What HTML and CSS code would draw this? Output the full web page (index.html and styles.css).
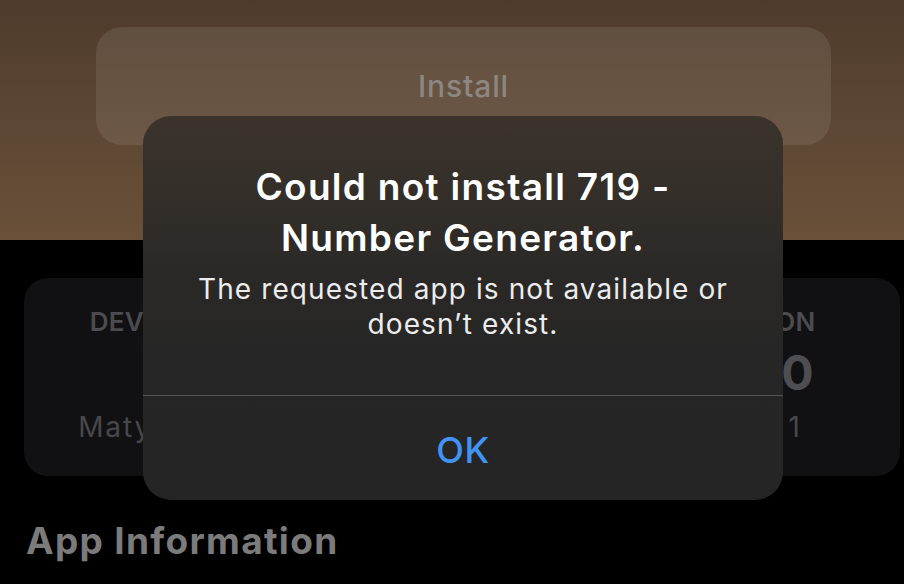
FILE: index.html
```html
<!DOCTYPE html>
<html lang="en">
<head>
<meta charset="utf-8">
<title>Could not install</title>
<link rel="stylesheet" href="styles.css">
</head>
<body>
<div class="screen">
  <header class="hero">
    <div class="install-btn">Install</div>
  </header>

  <section class="cards">
    <div class="card">
      <div class="card-label">DEVELOPER</div>
      <div class="card-value icon-slot"></div>
      <div class="card-sub card-name">Matyáš Kříž</div>
    </div>
    <div class="card"></div>
    <div class="card">
      <div class="card-label">VERSION</div>
      <div class="card-value">1.0.0</div>
      <div class="card-sub">Build 1</div>
    </div>
  </section>

  <h2 class="section-title">App Information</h2>

  <div class="alert" role="alertdialog">
    <div class="alert-body">
      <div class="alert-title">Could not install 719 - Number Generator.</div>
      <div class="alert-message">The requested app is not available or doesn’t exist.</div>
    </div>
    <div class="alert-actions">
      <button class="alert-btn">OK</button>
    </div>
  </div>
</div>
</body>
</html>
```

FILE: styles.css
```css
* { box-sizing: border-box; }

html, body {
  margin: 0;
  padding: 0;
  background: #000;
}

body {
  font-family: Inter, "Noto Sans", "Liberation Sans", sans-serif;
  width: 904px;
  height: 584px;
  overflow: hidden;
}

.screen {
  position: relative;
  width: 904px;
  height: 584px;
  background: #000;
}

.hero {
  height: 240px;
  padding: 27px 73px 0 96px;
  background: linear-gradient(180deg, #4e3b2b 0%, #5b4532 45%, #6a5039 100%);
}

.install-btn {
  height: 118px;
  border-radius: 26px;
  background: rgba(255, 255, 255, 0.09);
  color: #8c8781;
  font-size: 30px;
  font-weight: 500;
  letter-spacing: 0.9px;
  display: flex;
  align-items: center;
  justify-content: center;
}

.cards {
  display: grid;
  grid-template-columns: repeat(3, 286px);
  gap: 9px;
  padding: 38px 0 0 24px;
}

.card {
  height: 198px;
  border-radius: 24px;
  background: #111113;
  display: flex;
  flex-direction: column;
  align-items: center;
  padding-top: 29px;
}

.card-label {
  font-size: 26px;
  line-height: 30px;
  font-weight: 600;
  color: #4b4b50;
  letter-spacing: 0.2px;
}

.card-value {
  margin-top: 8px;
  font-size: 48px;
  line-height: 56px;
  font-weight: 700;
  color: #4e4e52;
}

.icon-slot {
  height: 56px;
}

.card-sub {
  margin-top: 9px;
  font-size: 28px;
  line-height: 34px;
  color: #48484c;
  letter-spacing: 0.2px;
}

.card-name {
  letter-spacing: 1.9px;
}

.section-title {
  margin: 43px 0 0 26px;
  font-size: 37px;
  line-height: 44px;
  font-weight: 700;
  color: #7b7b7b;
  letter-spacing: 1.3px;
}

.alert {
  position: absolute;
  left: 143px;
  top: 116px;
  width: 640px;
  height: 384px;
  border-radius: 28px;
  background: linear-gradient(180deg, #3b332c 0px, #332e29 90px, #2b2927 150px, #262626 240px, #252525 384px);
  display: flex;
  flex-direction: column;
  overflow: hidden;
}

.alert-body {
  padding: 45px 30px 0;
  height: 280px;
  border-bottom: 1px solid #545454;
  text-align: center;
  display: flex;
  flex-direction: column;
  align-items: center;
}

.alert-title {
  max-width: 470px;
  font-size: 37px;
  line-height: 51px;
  font-weight: 600;
  color: #ffffff;
  letter-spacing: 1.3px;
}

.alert-message {
  margin-top: 9px;
  font-size: 28px;
  line-height: 35px;
  font-weight: 400;
  color: #ececec;
  letter-spacing: 1.1px;
}

.alert-actions {
  flex: 1;
  display: flex;
}

.alert-btn {
  flex: 1;
  border: 0;
  background: transparent;
  font-family: inherit;
  font-size: 36px;
  font-weight: 500;
  color: #4194f4;
  letter-spacing: 0.5px;
  padding: 4px 0 0;
  cursor: pointer;
}
```
